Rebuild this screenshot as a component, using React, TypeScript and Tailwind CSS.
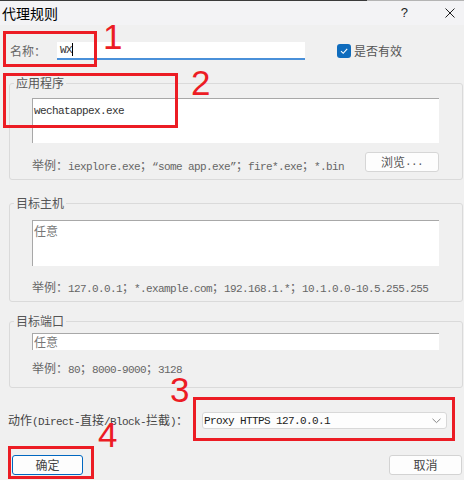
import React from "react";

const CJK = /([\u2e80-\u9fff\u3000-\u303f\uff00-\uffef]+)/;

// SimSun-like mix: CJK at 12px, Latin in a 6px-wide mono
function T({ s }: { s: string }) {
  return (
    <>
      {s
        .split(CJK)
        .filter(Boolean)
        .map((p, i) =>
          CJK.test(p) ? (
            <span key={i} className="text-[12px] tracking-normal font-['Noto_Sans_CJK_SC',sans-serif]">
              {p}
            </span>
          ) : (
            <span key={i} className="text-[11px] tracking-[-0.6px] font-['Liberation_Mono',monospace] whitespace-pre">
              {p}
            </span>
          )
        )}
    </>
  );
}

function Group({ title, children }: { title: string; children: React.ReactNode }) {
  return (
    <fieldset className="ml-[9px] w-[454px] border border-[#dadada] rounded-[3px]">
      <legend className="ml-[4px] px-[2px] text-[12px] leading-[14px] text-[#555] font-['Noto_Sans_CJK_SC',sans-serif]">
        {title}
      </legend>
      {children}
    </fieldset>
  );
}

function Num({ n, className }: { n: string; className: string }) {
  return (
    <span
      className={`absolute text-[35px] leading-none text-[#ec1c24] font-['Liberation_Sans',sans-serif] ${className}`}
    >
      {n}
    </span>
  );
}

export default function App() {
  return (
    <div className="relative w-[464px] h-[480px] overflow-hidden bg-[#f0f0f0] leading-[14px]">
      {/* window title */}
      <div className="bg-[#f3f3f5] h-[25px]">
        <div className="flex h-px">
          <div className="w-[367px] bg-[#3a3a3a]" />
          <div className="flex-1 bg-[#b4b4b4]" />
        </div>
        <div className="flex items-center h-[24px] pl-[2px]">
          <span className="text-[14px] text-black font-['Noto_Sans_CJK_SC',sans-serif]">代理规则</span>
          <span className="ml-auto text-[13px] text-[#222] font-['Liberation_Sans',sans-serif]">?</span>
          <svg className="ml-[37px] mr-[9px]" width="10" height="10" viewBox="0 0 10 10">
            <path d="M0.5 0.5 L9.5 9.5 M9.5 0.5 L0.5 9.5" stroke="#1f1f1f" strokeWidth="1" />
          </svg>
        </div>
      </div>

      {/* name row */}
      <div className="flex items-center h-[17px] mt-[17px] pl-[10px]">
        <span className="w-[47px] text-[#666]">
          <T s="名称：" />
        </span>
        <div className="flex items-center w-[248px] h-[18px] bg-white border-b-2 border-[#4a90d9] pl-[3px] text-[#333]">
          <T s="WX" />
          <span className="w-px h-[13px] bg-black" />
        </div>
        <span className="ml-[32px] flex items-center justify-center w-[14px] h-[14px] rounded-[3px] bg-[#0f6cbd]">
          <svg width="10" height="10" viewBox="0 0 10 10">
            <path d="M2 5.2 L4.2 7.3 L8.2 2.8" fill="none" stroke="white" strokeWidth="1.1" />
          </svg>
        </span>
        <span className="ml-[3px] text-[#555]">
          <T s="是否有效" />
        </span>
      </div>

      <div className="mt-[17px]">
        <Group title="应用程序">
          <div className="pl-[22px] pr-[23px] pt-[8px] pb-[7px]">
            <div className="w-[407px] h-[45px] bg-white border-t border-l border-[#a8a8a8] pl-[1px] pt-[2px] text-[#333]">
              <T s="wechatappex.exe" />
            </div>
            <div className="flex items-center justify-between h-[20px] mt-[9px] text-[#666]">
              <span className="mt-[6px]">
                <T s="举例：iexplore.exe；“some app.exe”；fire*.exe；*.bin" />
              </span>
              <span className="flex items-center justify-center w-[74px] h-[20px] bg-[#fdfdfd] border border-[#d6d6d6] rounded-[3px] text-[#555]">
                <T s="浏览..." />
              </span>
            </div>
          </div>
        </Group>
      </div>

      <div className="mt-[16px]">
        <Group title="目标主机">
          <div className="pl-[22px] pr-[23px] pt-[10px] pb-[5px]">
            <div className="w-[407px] h-[46px] bg-white border-t border-l border-[#a8a8a8] pl-[1px] pt-[2px] text-[#777]">
              <T s="任意" />
            </div>
            <div className="mt-[13px] text-[#666]">
              <T s="举例：127.0.0.1；*.example.com；192.168.1.*；10.1.0.0-10.5.255.255" />
            </div>
          </div>
        </Group>
      </div>

      <div className="mt-[12px]">
        <Group title="目标端口">
          <div className="pl-[22px] pr-[23px] pt-[5px] pb-[10px]">
            <div className="flex items-center w-[407px] h-[17px] bg-white border-t border-l border-[#a8a8a8] pl-[1px] text-[#777]">
              <T s="任意" />
            </div>
            <div className="mt-[10px] text-[#666]">
              <T s="举例：80；8000-9000；3128" />
            </div>
          </div>
        </Group>
      </div>

      {/* action row */}
      <div className="flex items-center mt-[24px] pl-[8px] h-[17px]">
        <span className="w-[194px] text-[#444]">
          <T s="动作(Direct-直接/Block-拦截)：" />
        </span>
        <div className="flex items-center w-[245px] h-[17px] bg-[#fdfdfd] border border-[#d8d8d8] rounded-[3px] pl-[1px] text-[#222]">
          <T s="Proxy HTTPS 127.0.0.1" />
          <svg className="ml-auto mr-[5px]" width="9" height="6" viewBox="0 0 9 6">
            <path d="M0.5 0.8 L4.5 4.6 L8.5 0.8" fill="none" stroke="#888" strokeWidth="1" />
          </svg>
        </div>
      </div>

      {/* buttons */}
      <div className="flex justify-between mt-[26px] pl-[12px] pr-[2px]">
        <span className="flex items-center justify-center w-[71px] h-[20px] bg-[#fdfdfd] border border-[#0067c0] rounded-[3px] text-[#444]">
          <T s="确定" />
        </span>
        <span className="flex items-center justify-center w-[73px] h-[20px] bg-[#fdfdfd] border border-[#d3d3d3] rounded-[3px] text-[#444]">
          <T s="取消" />
        </span>
      </div>

      {/* red annotations over the dialog */}
      <div className="absolute left-[3px] top-[31px] w-[94px] h-[36px] border-[3px] border-[#ec1c24]" />
      <div className="absolute left-[3px] top-[73px] w-[175px] h-[55px] border-[3px] border-[#ec1c24]" />
      <div className="absolute left-[193px] top-[397px] w-[262px] h-[44px] border-[3px] border-[#ec1c24]" />
      <div className="absolute left-[8px] top-[446px] w-[86px] h-[33px] border-[3px] border-[#ec1c24]" />
      <Num n="1" className="left-[103px] top-[19px]" />
      <Num n="2" className="left-[191px] top-[65px]" />
      <Num n="3" className="left-[170px] top-[372px]" />
      <Num n="4" className="left-[98px] top-[417px]" />
    </div>
  );
}
